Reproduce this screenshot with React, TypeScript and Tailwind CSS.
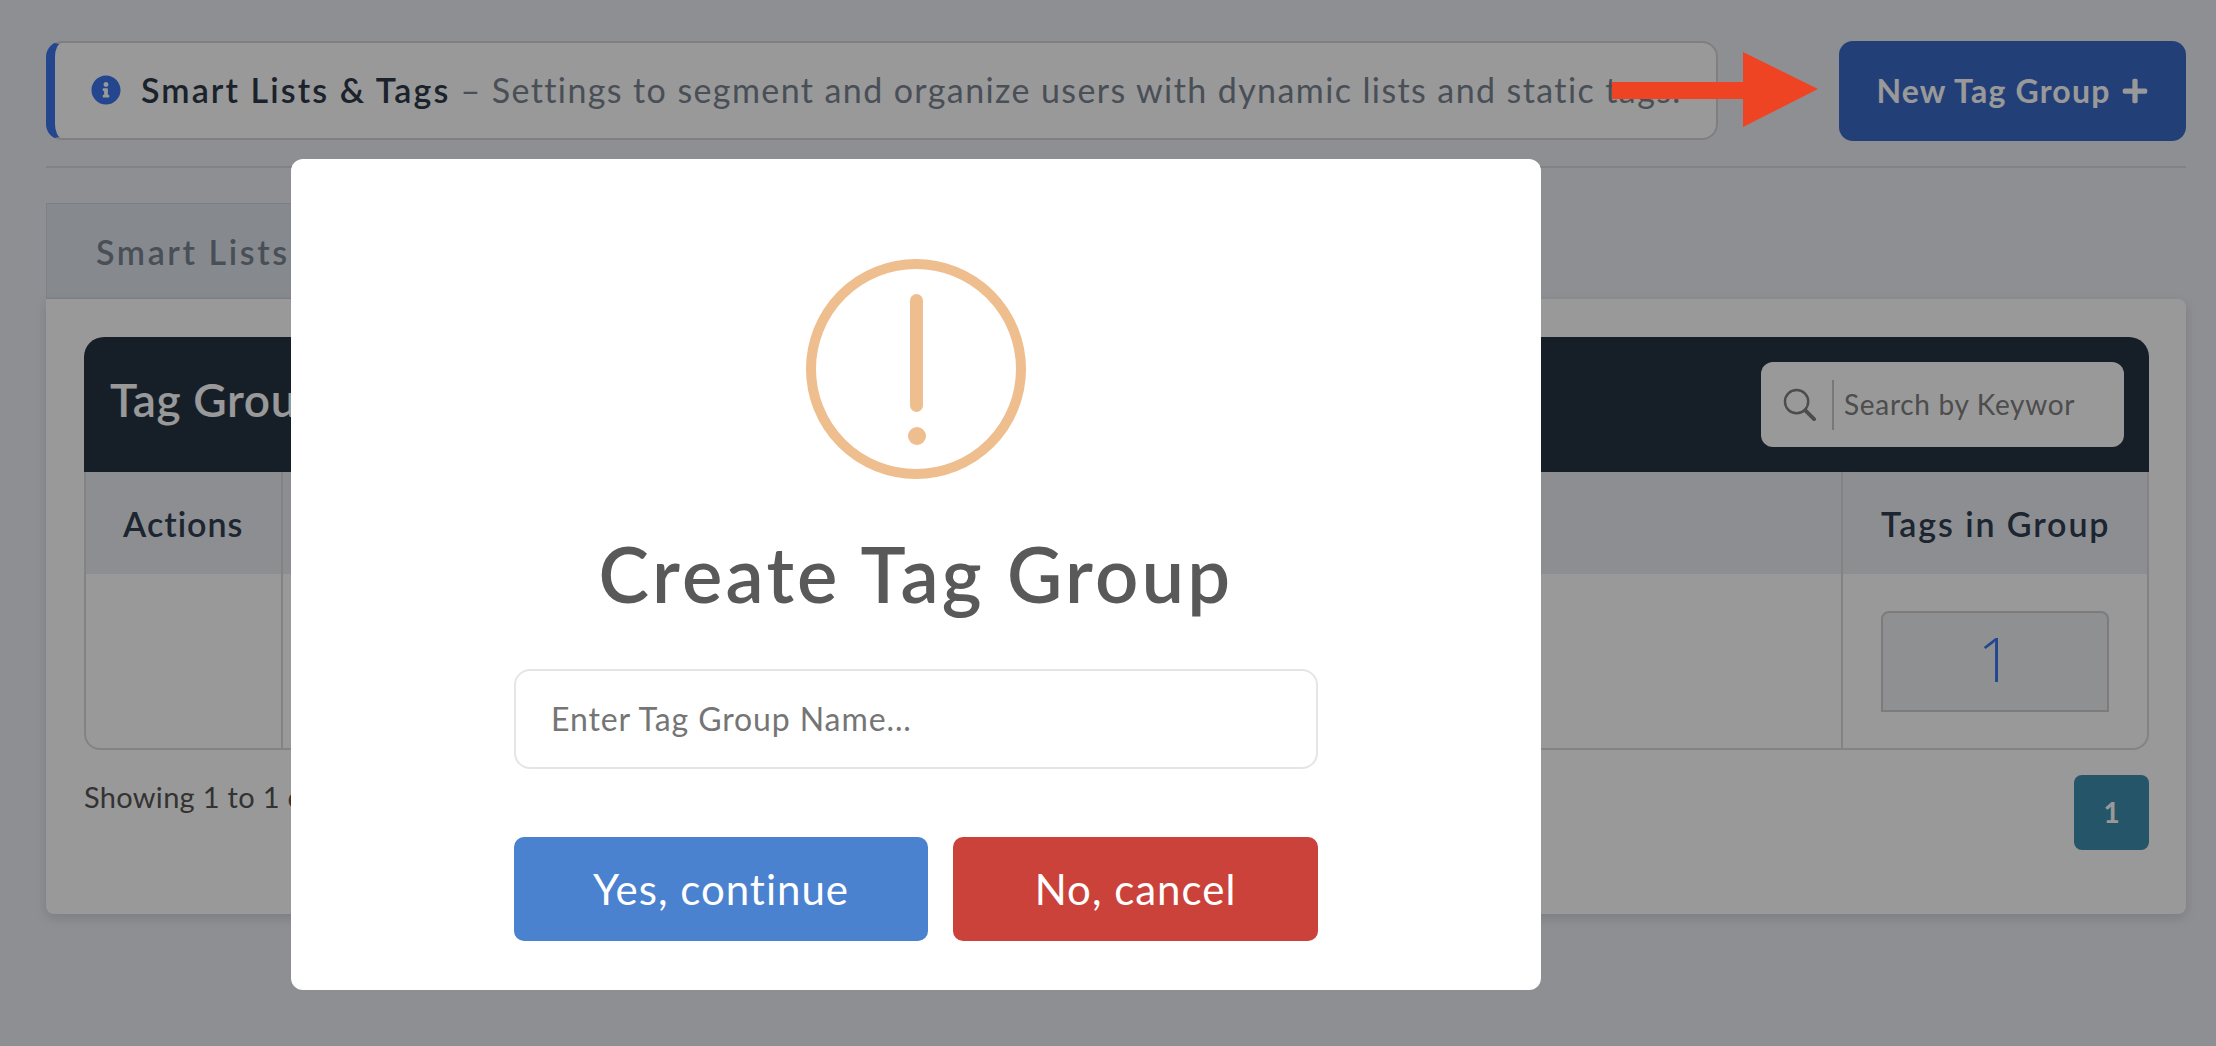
import { FaInfoCircle, FaPlus } from "react-icons/fa";

const FONT = "font-['Lato','Open_Sans',sans-serif]";

function SearchGlyph() {
  return (
    <svg viewBox="0 0 34 34" className="h-[33px] w-[33px] shrink-0" fill="none" stroke="#7f7f7f">
      <circle cx="14" cy="14" r="12" strokeWidth="2.5" />
      <path d="M23 23 L32 32" strokeWidth="4" strokeLinecap="round" />
    </svg>
  );
}

function AlertGlyph() {
  return (
    <svg viewBox="0 0 220 220" className="h-[220px] w-[220px]" fill="none">
      <circle cx="110" cy="110" r="105" stroke="#efbe8e" strokeWidth="10" />
      <rect x="104" y="35" width="13" height="118" rx="6.5" fill="#efbe8e" />
      <circle cx="111" cy="177" r="9" fill="#efbe8e" />
    </svg>
  );
}

function PageBehind() {
  return (
    <div className="min-h-[1046px] bg-[#edeef5] pl-[46px] pr-[30px] pt-[41px]">
      <div className="flex items-start justify-between">
        <div className="flex h-[99px] w-[1672px] items-center overflow-hidden rounded-[16px] border-2 border-l-[9px] border-[#d4d4d4] border-l-[#3c76ee] bg-white pl-[36px] pb-[2px]">
          <FaInfoCircle className="h-[30px] w-[30px] shrink-0 text-[#3c76ee]" />
          <p className="ml-[20px] whitespace-nowrap text-[34px] tracking-[1.4px] text-[#7b8491]">
            <span className="font-semibold tracking-[2.1px] text-[#2d3a49]">Smart Lists &amp; Tags</span> – Settings to segment and organize users with dynamic lists and static tags.
          </p>
        </div>
        <button
          type="button"
          className="flex h-[100px] w-[347px] items-center justify-center gap-[10px] rounded-[14px] bg-[#3a69c8] text-[32px] font-bold tracking-[1.2px] text-white"
        >
          New Tag Group
          <FaPlus className="h-[28px] w-[28px]" />
        </button>
      </div>

      <div className="mt-[25px] h-[2px] bg-[#d9d9d9]" />

      <div className="mt-[35px] flex h-[96px] w-[400px] items-center border border-[#d0d6df] bg-[#dfe6ee] pl-[49px] text-[34px] font-semibold tracking-[2.6px] text-[#7b8491]">
        Smart Lists
      </div>

      <div className="h-[615px] rounded-b-[8px] rounded-tr-[8px] bg-white pl-[38px] pr-[37px] pt-[38px] shadow-[0_4px_12px_rgba(0,0,0,0.12)]">
        <div className="flex h-[135px] items-center justify-between rounded-t-[20px] bg-[#263443] pl-[26px] pr-[25px]">
          <h2 className="pb-[10px] text-[46px] font-semibold tracking-[0.6px] text-white">Tag Group</h2>
          <div className="flex h-[85px] w-[363px] items-center rounded-[12px] bg-white pl-[22px]">
            <SearchGlyph />
            <div className="ml-[16px] h-[50px] w-[2px] bg-[#c8c8c8]" />
            <span className="ml-[10px] pb-[2px] text-[28px] tracking-[0.7px] text-[#808080]">Search by Keywor</span>
          </div>
        </div>

        <div className="overflow-hidden rounded-b-[16px] border-x-2 border-b-2 border-[#dadada]">
          <div className="flex h-[102px] bg-[#ebedf3] text-[34px] font-semibold text-[#2f3e50]">
            <div className="flex w-[197px] items-center border-r-2 border-[#dadada] pl-[37px] tracking-[1px]">Actions</div>
            <div className="flex-1" />
            <div className="flex w-[306px] items-center border-l-2 border-[#dadada] pl-[38px] tracking-[1.9px]">Tags in Group</div>
          </div>
          <div className="flex h-[174px]">
            <div className="w-[197px] border-r-2 border-[#dadada]" />
            <div className="flex-1" />
            <div className="flex w-[306px] items-start border-l-2 border-[#dadada] pl-[38px] pt-[37px]">
              <div className="flex h-[101px] w-[228px] items-center justify-center rounded-t-[8px] border-2 border-[#cfcfcf] bg-[#eef0f3] pb-[6px] font-['Open_Sans',sans-serif] text-[60px] font-light text-[#3c76ee]">
                1
              </div>
            </div>
          </div>
        </div>

        <div className="flex items-start justify-between pt-[25px]">
          <p className="text-[29px] tracking-[0.3px] text-[#555555]">Showing 1 to 1 of 1 entries</p>
          <div className="flex h-[75px] w-[75px] items-center justify-center rounded-[8px] bg-[#3f8ead] pb-[2px] text-[28px] font-bold text-white">
            1
          </div>
        </div>
      </div>
    </div>
  );
}

export default function App() {
  return (
    <div className={`relative h-[1046px] overflow-hidden ${FONT}`}>
      <PageBehind />

      <div className="absolute inset-0 bg-black/40 pl-[291px] pt-[159px]">
        <div className="flex h-[831px] w-[1250px] flex-col items-center rounded-[12px] bg-white pt-[100px]">
          <AlertGlyph />
          <h1 className="mt-[45px] text-[76px] font-semibold leading-[100px] tracking-[3.2px] text-[#595959]">Create Tag Group</h1>
          <input
            placeholder="Enter Tag Group Name..."
            className="mt-[45px] h-[100px] w-[804px] rounded-[16px] border-2 border-[#e5e5e5] pb-[2px] pl-[35px] text-[32px] tracking-[0.9px] outline-none placeholder:text-[#757575]"
          />
          <div className="mt-[68px] flex w-[804px] justify-between">
            <button type="button" className="h-[104px] w-[414px] rounded-[10px] bg-[#4a82d0] text-[42px] tracking-[1px] text-white">
              Yes, continue
            </button>
            <button type="button" className="h-[104px] w-[365px] rounded-[10px] bg-[#cb423a] text-[42px] tracking-[1px] text-white">
              No, cancel
            </button>
          </div>
        </div>
      </div>

      {/* red annotation arrow drawn on top of the screenshot */}
      <svg viewBox="0 0 206 75" className="absolute left-[1612px] top-[52px] h-[75px] w-[206px]">
        <path d="M0 30 H131 V0 L206 37 L131 75 V47 H0 Z" fill="#ef4423" />
      </svg>
    </div>
  );
}
